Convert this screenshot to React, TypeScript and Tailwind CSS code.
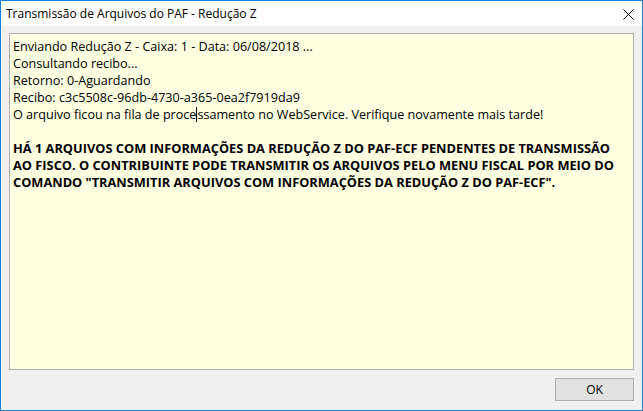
import React from "react";

const lines = [
  "Enviando Redução Z - Caixa: 1 - Data: 06/08/2018 ...",
  "Consultando recibo...",
  "Retorno: 0-Aguardando",
  "Recibo: c3c5508c-96db-4730-a365-0ea2f7919da9",
];

const App = () => {
  return (
    <div
      className="w-[643px] h-[411px] flex flex-col border border-[#1883d7] bg-[#f0f0f0] overflow-hidden"
      style={{ fontFamily: '"Open Sans", "Noto Sans", sans-serif' }}
    >
      {/* title bar */}
      <div className="h-[25px] bg-white flex items-center justify-between pl-[5px] pr-[8px] shrink-0">
        <span className="text-[12px] text-black leading-none">
          Transmissão de Arquivos do PAF - Redução Z
        </span>
        <svg width="11" height="11" viewBox="0 0 11 11" className="mt-[1px]">
          <path d="M0.5 0.5 L10.5 10.5 M10.5 0.5 L0.5 10.5" stroke="#000" strokeWidth="1" />
        </svg>
      </div>

      {/* memo */}
      <div className="mt-[7px] mx-2 h-[337px] shrink-0 border border-[#abadb3] bg-[#ffffe1] px-[3px] pt-[4px] text-[12.6px] leading-[17px] text-black">
        {lines.map((l) => (
          <div key={l}>{l}</div>
        ))}
        <div>
          O arquivo ficou na fila de proce
          <span className="inline-block w-px h-[15px] bg-black align-[-3px]" />
          ssamento no WebService. Verifique novamente mais tarde!
        </div>
        <div className="h-[17px]" />
        <div className="font-bold text-[12.8px]">
          HÁ 1 ARQUIVOS COM INFORMAÇÕES DA REDUÇÃO Z DO PAF-ECF PENDENTES DE TRANSMISSÃO
          <br />
          AO FISCO. O CONTRIBUINTE PODE TRANSMITIR OS ARQUIVOS PELO MENU FISCAL POR MEIO DO
          <br />
          COMANDO "TRANSMITIR ARQUIVOS COM INFORMAÇÕES DA REDUÇÃO Z DO PAF-ECF".
        </div>
      </div>

      {/* buttons */}
      <div className="flex justify-end mt-2 mr-[8px]">
        <button className="w-[79px] h-[23px] border border-[#adadad] bg-[#e1e1e1] text-[12px] text-black leading-none">
          OK
        </button>
      </div>
    </div>
  );
};

export default App;
